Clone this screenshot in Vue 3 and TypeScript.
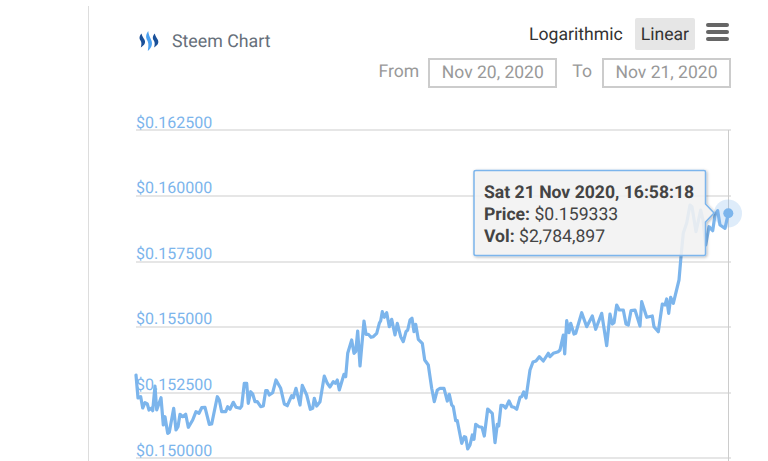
<script setup lang="ts">
const gridYs = [130, 196, 262, 327, 393, 458]
const labels = [
  { t: '$0.162500', y: 128 },
  { t: '$0.160000', y: 193 },
  { t: '$0.157500', y: 259 },
  { t: '$0.155000', y: 324 },
  { t: '$0.152500', y: 390 },
  { t: '$0.150000', y: 456 },
]
const seriesA = '136,375 138,398 140.7,396.7 142.7,408 145,402.7 147.3,404 149,410 151.3,408.3 152.7,410.7 155,386 156.7,410 161,397.7 163.3,425 165,416.7 167.7,433.3 169.3,432.3 173.7,408.3 176,430 178,426.7 180,414.3 182.7,416.7 185.7,414.3 188.3,427.3 192.7,420 196,411.7 199,413.3 201.7,407.7 205,407.3 209.3,424.3 211.7,424 217.3,396.7 219.3,400 221.7,411.7 225.7,411.7 227.7,406.7 230,409.3 233.3,402.3 236,407.3 240,408.3 241.7,406 244.3,383.3 246.7,383.3 248.3,403.3 250.7,391.7 252.7,394 255,401.7 257.3,401.7 260.7,406.7 263.3,406 265.7,390.7 267.3,390.7 269.3,395 272.7,392.7 276,380 280.7,388.3 284.3,404 287.3,405.7 291.7,395.7 293.3,397.7 296,388.3 300,405 302.3,385.3 306.7,395 310.3,409.3 312.7,408.3 314.3,398.3 316.7,406 320,401.7 324.3,376 327.3,383.3 330,387 333.3,381.7 335.3,383.3 337.3,380 339.3,390 344,374.3 345.7,376.7 347.7,353.3 351.7,340 354,353.3 355.7,351.7 357.7,331 360,366 364,321 366,334.3 368.3,334.3 371,337.3 373.3,336.7 376.7,333.3 379.3,323.3 380.7,320.7 382.3,311.7 384.3,317.3 386.7,312.7 389.3,326.7 391.7,319.3 395,335 397.3,323.3 400.7,336.7 403.3,341.7 406,331.7 407.7,330 410,320 412,318.3 414,331.7 415.7,324.3 418.3,339.3 422.3,343.3 424.7,360 428.3,365 431.7,388.3 434.3,401.7 437.3,390 440,388.3 444,388.3 447.3,401 449.3,394.3 451.7,405 453.3,406.7 455.7,420.7 457.3,420.7 461.7,443.3 464.3,436.7 465.7,437.3 467.7,449 470,445 472.3,435 474,439.3 475.7,424.3 479,426.7 482,427.3 484.3,436 487.7,409 492.3,413.3 495,442.7 497.3,424.3 498.7,426 501,405.3 503.3,405.7 505.7,408 509,401 511.7,406.7 514,407.3 516.7,409.3 520,397.3 521.7,396.7 523.7,392 526,398 530,370 533,362 536,361 539.3,356.7 543.3,361 548.3,353.3 550,356.7 553.3,353.3 558.3,351.7 560,350 563.3,335 564.7,354 566.7,320.7 569,332.7 570.7,323.3 574,334 575.7,333.3 581.7,312.7 586.7,326.7 592.3,316 595.7,329.3 601.7,313.3 606.7,345.7 610,314 612.3,324 614,322.7 616.7,305 619.3,310 623.3,310 626,324 628.3,325 631,310.7 635,310 640,326 641.7,301.7 646.7,317.3 652.3,316 654,326.7 658.3,331.7 662.3,304 665,305 666.7,299 668.7,313.3 670.7,297.3 673.3,303.3 679,280 681,256.7 683.3,233 686.7,223 690,205 692,206.7 696,231.7 700.7,210 703,220 705.7,245 709,226.7 712.7,230.7 715,215 717.7,210.7 720,225 725,228.3 728.3,213.3'
</script>

<template>
  <div class="page">
    <div class="panel">
      <header class="head">
        <div class="brand">
          <svg class="logo" width="24" height="22" viewBox="0 0 24 22" aria-hidden="true">
            <path d="M4.500 3.500 C2 6.500 2.200 8.500 3.500 10.500 C4.800 12.500 4.500 14.500 3.800 17.500 C7.800 15 8.800 12.500 7.500 9.800 C6.300 7.500 5 6 4.500 3.500Z" fill="#1a5099"/>
            <path d="M11.200 1 C8.500 5 8.800 7.500 10.300 10.500 C11.800 13.500 11.500 16 10.800 21 C15 17.500 15.800 13.500 14.200 10 C12.800 7 11.600 4.500 11.200 1Z" fill="#4ba2f2"/>
            <path d="M17.800 3.500 C15.300 6.500 15.500 8.500 16.800 10.500 C18.100 12.500 17.800 14.500 17.100 17.500 C21.100 15 22.100 12.500 20.800 9.800 C19.600 7.500 18.300 6 17.800 3.500Z" fill="#1a5099"/>
          </svg>
          <span class="title">Steem Chart</span>
        </div>
        <div class="controls">
          <div class="scale-row">
            <span class="scale log">Logarithmic</span>
            <span class="scale active">Linear</span>
            <span class="burger"><i></i><i></i><i></i></span>
          </div>
          <div class="date-row">
            <span class="lbl">From</span>
            <span class="date">Nov 20, 2020</span>
            <span class="lbl to">To</span>
            <span class="date">Nov 21, 2020</span>
          </div>
        </div>
      </header>
      <svg class="chart" width="680" height="461" viewBox="88 0 680 461">
        <defs>
          <filter id="ts" x="-10%" y="-10%" width="125%" height="125%">
            <feDropShadow dx="1" dy="1" stdDeviation="1.500" flood-color="#000" flood-opacity="0.3"/>
          </filter>
        </defs>
        <line v-for="y in gridYs" :key="y" x1="136" x2="731" :y1="y" :y2="y" class="grid"/>
        <line x1="728.500" x2="728.500" y1="130" y2="461" class="cross"/>
        <text v-for="l in labels" :key="l.t" x="136" :y="l.y" class="axis">{{ l.t }}</text>
        <polyline :points="seriesA" class="series"/>
        <circle cx="728" cy="213.500" r="14" class="halo"/>
        <circle cx="728.300" cy="213.300" r="5" class="dot"/>
        <path class="tip" filter="url(#ts)" d="M476 170.500H704Q705.500 170.500 705.500 172V204L714 213L705.500 222V254Q705.500 255.500 704 255.500H476Q474 255.500 474 254V172Q474 170.500 476 170.500Z"/>
        <text class="tt" x="484" y="198"><tspan class="b">Sat 21 Nov 2020, 16:58:18</tspan></text>
        <text class="tt" x="484" y="220"><tspan class="b">Price:</tspan> $0.159333</text>
        <text class="tt" x="484" y="241.700"><tspan class="b">Vol:</tspan> $2,784,897</text>
      </svg>
    </div>
  </div>
</template>

<style scoped>
.page {
  width: 768px;
  height: 461px;
  overflow: hidden;
  background: #fff;
  padding: 6px 0 0 88px;
  box-sizing: border-box;
  font-family: Roboto, sans-serif;
  text-rendering: geometricPrecision;
}
.panel {
  position: relative;
  height: 455px;
  width: 680px;
  border-left: 1px solid #ddd;
  box-sizing: border-box;
}
.head {
  position: relative;
  z-index: 1;
  display: flex;
  justify-content: space-between;
  padding: 12px 37px 0 48px;
}
.brand {
  display: flex;
  align-items: center;
  height: 46px;
  gap: 11px;
}
.logo { display: block; }
.title { font-size: 17.800px; color: #666f7a; margin-top: 1px; }
.controls { display: flex; flex-direction: column; align-items: flex-end; }
.scale-row { display: flex; align-items: center; height: 32px; }
.scale {
  font-size: 17.600px;
  color: #333;
  padding: 0 6px;
  height: 32px;
  line-height: 35px;
  border-radius: 2px;
}
.log { margin-right: 6px; }
.active { background: #e6e6e6; }
.burger {
  display: flex;
  flex-direction: column;
  gap: 3px;
  width: 23px;
  margin: -4px 2px 0 11px;
}
.burger i { display: block; height: 4px; border-radius: 2px; background: #666; }
.date-row { display: flex; align-items: center; margin-top: 8px; }
.lbl { font-size: 17.600px; color: #999; margin: -2px 9px 0 0; }
.lbl.to { margin-left: 15px; margin-right: 10px; }
.date {
  box-sizing: border-box;
  width: 129px;
  height: 30px;
  line-height: 26px;
  text-align: center;
  border: 2px solid #ccc;
  font-size: 17.500px;
  color: #999;
}
.chart { position: absolute; left: -1px; top: -6px; display: block; }
.grid { stroke: #e6e6e6; stroke-width: 2; }
.cross { stroke: #ccc; stroke-width: 1; }
.axis { font: 16px Roboto, sans-serif; fill: #7cb5ec; }
.series { fill: none; stroke: #7cb5ec; stroke-width: 3.200; stroke-linejoin: round; stroke-linecap: round; }
.halo { fill: #7cb5ec; fill-opacity: 0.25; }
.dot { fill: #7cb5ec; }
.tip { fill: rgba(247, 247, 247, 0.85); stroke: #7cb5ec; stroke-width: 1.500; }
.tt { font: 17.600px Roboto, sans-serif; fill: #444; }
.b { font-weight: 700; }
</style>
